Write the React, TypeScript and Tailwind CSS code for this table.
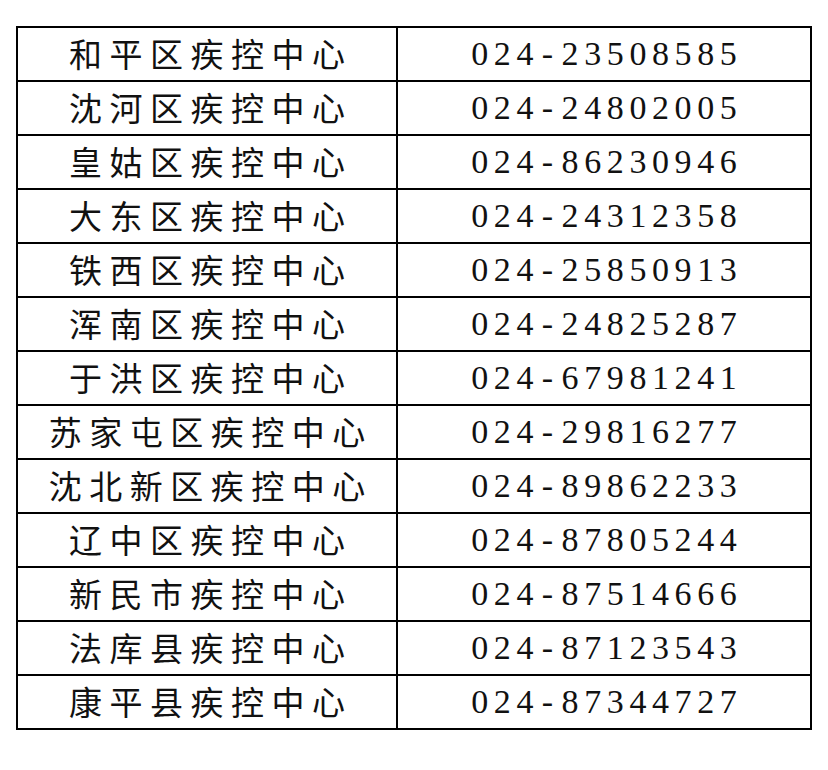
const rows: [string, string][] = [
  ['和平区疾控中心', '024-23508585'],
  ['沈河区疾控中心', '024-24802005'],
  ['皇姑区疾控中心', '024-86230946'],
  ['大东区疾控中心', '024-24312358'],
  ['铁西区疾控中心', '024-25850913'],
  ['浑南区疾控中心', '024-24825287'],
  ['于洪区疾控中心', '024-67981241'],
  ['苏家屯区疾控中心', '024-29816277'],
  ['沈北新区疾控中心', '024-89862233'],
  ['辽中区疾控中心', '024-87805244'],
  ['新民市疾控中心', '024-87514666'],
  ['法库县疾控中心', '024-87123543'],
  ['康平县疾控中心', '024-87344727'],
];

// Fixed-pitch characters, so every line keeps the spacing of the original sheet
function Spaced({ text, cellClass }: { text: string; cellClass: string }) {
  return (
    <div className="flex justify-center items-center">
      {Array.from(text).map((ch, i) => (
        <span key={i} className={cellClass}>
          {ch}
        </span>
      ))}
    </div>
  );
}

export default function App() {
  return (
    <div className="w-[828px] h-[770px] bg-white pt-[26px] pl-[16px]">
      <table className="border-collapse text-[#111]">
        <tbody>
          {rows.map(([name, phone]) => (
            <tr key={name} className="h-[54px]">
              <td className="w-[380px] border-2 border-black p-0 align-middle font-[family-name:Noto_Sans_CJK_SC,sans-serif]">
                <Spaced
                  text={name}
                  cellClass="inline-block w-[40.5px] text-center text-[33px] leading-none -translate-y-[1px]"
                />
              </td>
              <td className="w-[414px] border-2 border-black p-0 align-middle font-[family-name:Liberation_Serif,serif]">
                <Spaced text={phone} cellClass="inline-block w-[22.6px] text-center text-[34px] leading-none" />
              </td>
            </tr>
          ))}
        </tbody>
      </table>
    </div>
  );
}
